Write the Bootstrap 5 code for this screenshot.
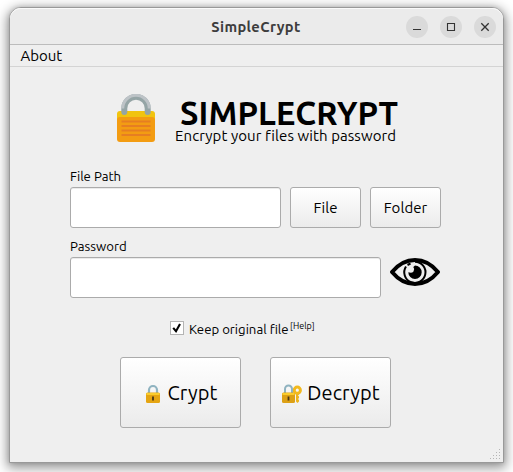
<!DOCTYPE html>
<html lang="en">
<head>
<meta charset="utf-8">
<title>SimpleCrypt</title>
<link href="https://cdn.jsdelivr.net/npm/bootstrap@5.3.0/dist/css/bootstrap.min.css" rel="stylesheet">
<style>
body{font-family:Ubuntu,"Noto Sans",sans-serif;color:#000;background:#fff;height:472px}
.app-window{width:495px;height:456px;margin:7px 0 0 9px;background:#efefef;border:1px solid #999;border-radius:12px 12px 0 0;box-shadow:0 3px 12px 2px rgba(0,0,0,.42),0 0 4px rgba(0,0,0,.12)}
.title-bar{height:37px;background:#ebebeb;border-bottom:1px solid #bcbcbc;border-radius:11px 11px 0 0;box-shadow:inset 0 1px #fafafa;display:grid;grid-template-columns:1fr auto 1fr;padding:0 7px 0 6px}
.title-bar h1{font-size:14.67px;line-height:36px;letter-spacing:.36px;color:#3d3d3d;padding-top:1px}
.win-btn{width:22px;height:22px;border:0;border-radius:50%;background:#dadada;padding:0;display:block}
.win-btn svg{display:block}
.menu-bar{height:22px;border-bottom:1px solid #d4d4d4;padding-left:10.5px;font-size:15px;line-height:21px}
.brand{height:76px;padding:27px 0 0 107px}
.brand h2{font-size:32.5px;line-height:30px;letter-spacing:.08px;margin-left:5px}
.brand p{font-size:15px;line-height:18px;letter-spacing:.08px;margin-top:-1px}
.brand-text{margin-left:20px;padding-top:4px}
.form-area{padding:0 60px}
.form-area .form-label{font-size:13.2px;height:20px;line-height:18px}
.form-control,.form-control:focus{height:41px;border:1px solid #ababab;border-radius:3px;box-shadow:inset 0 1px #ebebeb;background:#fff}
.push{border:1px solid #ababab;border-radius:3px;background:linear-gradient(#fff,#ebebeb);color:#000;padding:0}
.push:hover{border-color:#999;color:#000}
.push-sm{width:71px;height:41px;font-size:15px;letter-spacing:.05px;padding-top:2px;flex:none}
.push-lg{width:121px;height:71px;font-size:20px;letter-spacing:.1px}
.keep{height:16px;margin:22px 0 0 100px;font-size:13.2px;line-height:18px}
.keep .form-check-input{width:14px;height:14px;margin:1px 5px 0 0;border:1px solid #b4b4b4;border-radius:0;background-color:#fff;background-size:14px;flex:none}
.keep .form-check-input:checked{background-image:url("data:image/svg+xml,%3Csvg xmlns='http://www.w3.org/2000/svg' viewBox='0 0 14 14'%3E%3Cpath d='M3.2 6.8 6 10.2 10 3' fill='none' stroke='%23000' stroke-width='2.1'/%3E%3C/svg%3E")}
.help{font-size:9px;line-height:12px;margin-left:1.5px}
.size-grip{position:absolute;right:1px;bottom:1px}
</style>
</head>
<body class="overflow-hidden">
<div class="app-window position-relative">
  <header class="title-bar align-items-center">
    <span></span>
    <h1 class="m-0 fw-bold">SimpleCrypt</h1>
    <div class="d-flex justify-content-end" style="gap:12px">
      <button class="win-btn" aria-label="Minimize"><svg width="22" height="22"><path d="M7 13.5h8" stroke="#333"/></svg></button>
      <button class="win-btn" aria-label="Maximize"><svg width="22" height="22"><path d="M7.5 7.5h7v7h-7z" fill="none" stroke="#333" stroke-width="1.1"/></svg></button>
      <button class="win-btn" aria-label="Close"><svg width="22" height="22"><path d="M7.300 7.300l7.400 7.400M14.700 7.300l-7.400 7.400" stroke="#333" stroke-width="1.300"/></svg></button>
    </div>
  </header>
  <nav class="menu-bar"><span>About</span></nav>
  <main>
    <div class="brand d-flex align-items-start">
      <svg class="flex-shrink-0" width="38" height="50" viewBox="0 0 38 50">
        <path d="M0 20q0-3 3-3h32q3 0 3 3v12H0z" fill="#f1c40f"/>
        <rect y="23" width="38" height="25" rx="3" fill="#f39c12"/>
        <path d="M4.500 27.500h29M4.500 32h29M4.500 36.500h29M4.500 41h29" stroke="#e67e22" stroke-width="1.8"/>
        <path d="M7.300 18V14.500a11.700 11.700 0 0 1 23.400 0V18" fill="none" stroke="#95a5a6" stroke-width="6" stroke-linecap="round"/>
        <path d="M5.700 14.500a13.300 13.300 0 0 1 26.600 0" fill="none" stroke="#bdc3c7" stroke-width="3"/>
      </svg>
      <div class="brand-text">
        <h2 class="mb-0 fw-bold text-nowrap">SIMPLECRYPT</h2>
        <p class="mb-0 text-nowrap">Encrypt your files with password</p>
      </div>
    </div>
    <div class="form-area" style="padding-top:24px">
      <label class="form-label d-block mb-0" for="path">File Path</label>
      <div class="d-flex">
        <input id="path" class="form-control" style="width:211px">
        <button class="btn push push-sm" style="margin-left:9px">File</button>
        <button class="btn push push-sm" style="margin-left:9px">Folder</button>
      </div>
      <label class="form-label d-block mb-0" for="pass" style="margin-top:9px">Password</label>
      <div class="d-flex">
        <input id="pass" type="password" class="form-control" style="width:311px">
        <svg width="50" height="28" viewBox="0 0 50 28" style="margin:1px 0 0 9px">
          <path d="M2 14C9 5.500 16 2 25 2S41 5.500 48 14C41 22.500 34 26 25 26S9 22.500 2 14z" fill="none" stroke="#000" stroke-width="3.900" stroke-linejoin="round"/>
          <path d="M16 8.500A10.600 10.600 0 1 0 25 3.700M17.500 7l3-1.500" fill="none" stroke="#000" stroke-width="2"/>
          <path d="M25 7.500a6.700 6.700 0 1 1-6.700 6.700q3.500 1.300 5.200-.800t-.2-4.500z"/>
        </svg>
      </div>
      <div class="keep d-flex">
        <input id="keep" class="form-check-input" type="checkbox" checked>
        <label for="keep">Keep original file</label><span class="help">[Help]</span>
      </div>
      <div class="d-flex" style="margin:21px 0 0 50px;gap:29px">
        <button class="btn push push-lg d-flex align-items-center justify-content-center">
          <svg width="16" height="20" viewBox="0 0 16 20" style="margin:3px 7px 0 1px">
            <path d="M4 10V6a4 4 0 0 1 8 0v4" fill="none" stroke="#8fb3c0" stroke-width="2.200"/>
            <rect x="1" y="8.500" width="14" height="10.500" rx="1.500" fill="#e5a512"/><path d="M1.500 9h13v2h-13z" fill="#fbcc2c"/>
            <path d="M8 12.500v4" stroke="#493518" stroke-width="1.800"/>
          </svg><span>Crypt</span>
        </button>
        <button class="btn push push-lg d-flex align-items-center justify-content-center">
          <svg width="21" height="20" viewBox="0 0 21 20" style="margin:3px 5px 0 0">
            <path d="M15 8h3v2.500l-1 1 1 1v1.500l-1 1 1 1v1.500l-1.500 1.500-1.500-1.500z" fill="#edb41d"/>
            <circle cx="16.300" cy="6.200" r="3.100" fill="none" stroke="#f2b91e" stroke-width="3"/>
            <path d="M4 9V5a3.500 3.500 0 0 1 7 0v4" fill="none" stroke="#8fb3c0" stroke-width="2"/>
            <rect x="1" y="8.500" width="13" height="10.500" rx="1.500" fill="#dda116"/><path d="M1.500 9h12v2h-12z" fill="#fbcc2c"/>
            <path d="M7.500 12.500v4" stroke="#493518" stroke-width="1.800"/>
          </svg><span>Decrypt</span>
        </button>
      </div>
    </div>
  </main>
  <svg class="size-grip" width="12" height="12" fill="#b5b5b5"><path d="M9 0h1v1H9zM6 3h1v1H6zM9 3h1v1H9zM3 6h1v1H3zM6 6h1v1H6zM9 6h1v1H9zM0 9h1v1H0zM3 9h1v1H3zM6 9h1v1H6zM9 9h1v1H9z"/></svg>
</div>
<script src="https://cdn.jsdelivr.net/npm/bootstrap@5.3.0/dist/js/bootstrap.bundle.min.js"></script>
</body>
</html>
